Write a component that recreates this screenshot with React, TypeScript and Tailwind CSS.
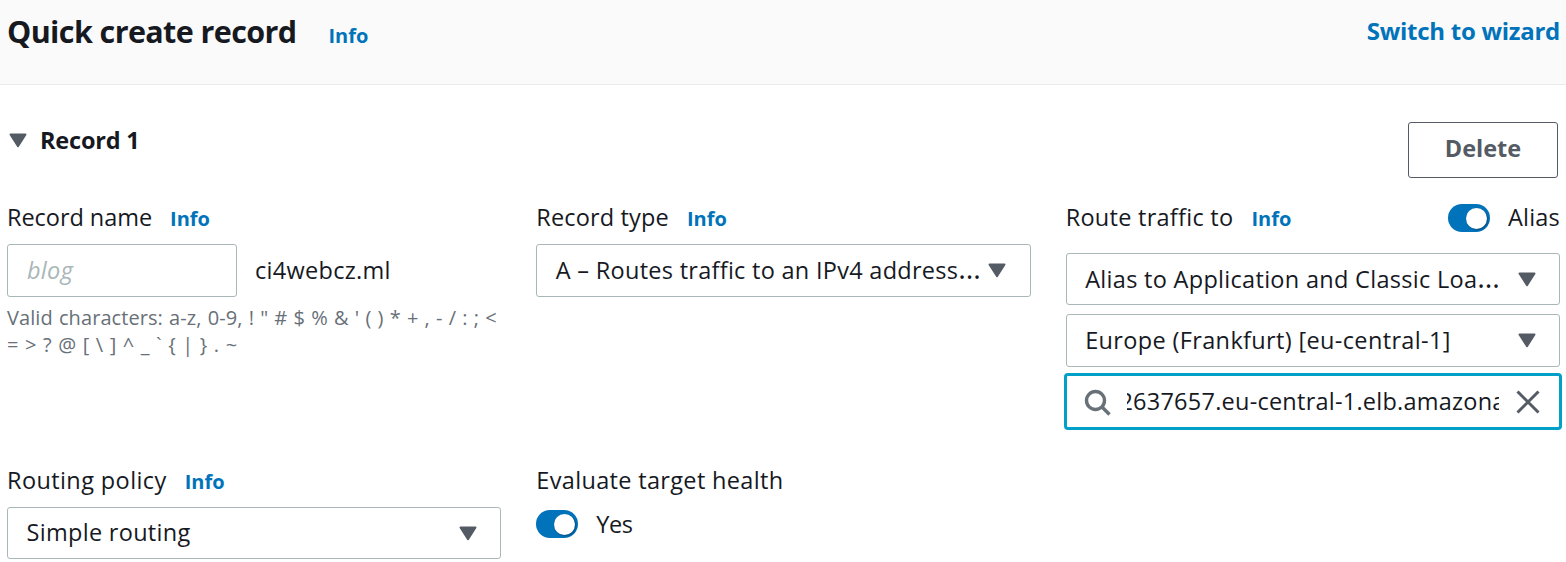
import type { ReactNode } from "react";

function Caret({ className = "" }: { className?: string }) {
  return (
    <svg width="18" height="15" viewBox="0 0 18 15" className={`block shrink-0 ${className}`}>
      <path d="M1.5 1.5h15L9 13.2z" fill="#545b64" stroke="#545b64" strokeWidth="2" strokeLinejoin="round" />
    </svg>
  );
}

function Info({ className = "" }: { className?: string }) {
  return (
    <a className={`text-[20px] leading-7 font-bold text-[#0073bb] ${className}`}>Info</a>
  );
}

function Label({ children, info = false, className = "" }: { children: ReactNode; info?: boolean; className?: string }) {
  return (
    <div className="-mt-px flex h-[33px] items-baseline gap-[18px] whitespace-nowrap">
      <span className={`leading-8 ${className}`}>{children}</span>
      {info && <Info />}
    </div>
  );
}

function Select({ children, className = "", caret = "mr-[23px]" }: { children: ReactNode; className?: string; caret?: string }) {
  return (
    <div className={`flex items-center justify-between rounded-[3px] border border-[#aab7b8] bg-white pl-[18.5px] ${className}`}>
      <span className="whitespace-nowrap">{children}</span>
      <Caret className={caret} />
    </div>
  );
}

function Ellipsis() {
  return <span className="text-[29px] leading-none tracking-normal">…</span>;
}

function Toggle() {
  return (
    <span className="flex h-7 w-[42px] shrink-0 items-center justify-end rounded-full bg-[#0073bb] pr-[3px]">
      <span className="h-[21px] w-[21px] rounded-full bg-white shadow-[1px_1px_2px_rgba(0,0,0,0.35)]" />
    </span>
  );
}

export default function App() {
  return (
    <div className="h-[562px] w-[1566px] overflow-hidden bg-white font-['Open_Sans','Noto_Sans',sans-serif] text-[23.5px] text-[#16191f]">
      <header className="flex h-[85px] items-start justify-between border-b border-[#eaeded] bg-[#fafafa] pr-[6px] pl-[7px]">
        <div className="flex items-baseline gap-8 pt-[11px]">
          <h1 className="text-[30.5px] leading-10 font-bold tracking-[-0.6px] whitespace-nowrap">Quick create record</h1>
          <Info />
        </div>
        <a className="pt-[15px] text-[24px] leading-8 font-bold tracking-[-0.27px] whitespace-nowrap text-[#0073bb]">Switch to wizard</a>
      </header>

      <main className="pr-[6px] pl-[7px]">
        <div className="flex h-[117px] items-start justify-between pt-[37px] pr-[2px]">
          <div className="flex items-center gap-[13px] pl-[2px]">
            <Caret className="mt-px" />
            <h2 className="text-[23.5px] leading-9 font-bold tracking-[-0.2px]">Record 1</h2>
          </div>
          <button className="h-14 w-[150px] rounded-[3px] border border-[#545b64] pb-[2px] font-bold text-[#545b64]">Delete</button>
        </div>

        <div className="grid h-[263px] grid-cols-3 gap-x-[35px]">
          <section>
            <Label info className="tracking-[-0.05px]">Record name</Label>
            <div className="mt-[10px] flex items-center gap-[18px]">
              <div className="flex h-[53px] w-[230px] items-center rounded-[3px] border border-[#aab7b8] pl-[19px] tracking-[0.3px] text-[#aab7b8] italic">blog</div>
              <span className="tracking-[0.3px]">ci4webcz.ml</span>
            </div>
            <p className="mt-[7px] text-[20px] leading-[27px] tracking-[0.08px] whitespace-nowrap text-[#687078]">
              <span className="[word-spacing:0.88px]">Valid characters: a-z, 0-9, ! " # $ % &amp; ' ( ) * + , - / : ; &lt;</span>
              <br />
              <span className="[word-spacing:1.2px]">= &gt; ? @ [ \ ] ^ _ ` {"{"} | {"}"} . ~</span>
            </p>
          </section>
          <section>
            <Label info className="tracking-[0.15px]">Record type</Label>
            <Select className="mt-[10px] h-[53px] tracking-[0.28px]" caret="mr-[24px]">
              A – Routes traffic to an IPv4 address<Ellipsis />
            </Select>
          </section>
          <section>
            <div className="flex items-center justify-between">
              <Label info className="tracking-[0.27px]">Route traffic to</Label>
              <div className="flex items-center gap-[18px]">
                <Toggle />
                <span className="-mt-[2px] leading-8 tracking-[0.2px]">Alias</span>
              </div>
            </div>
            <Select className="mt-[19px] h-[52px] pt-[2px] tracking-[0.3px]" caret="mr-[23px] -mt-[2px]">
              Alias to Application and Classic Loa<Ellipsis />
            </Select>
            <Select className="mt-[9px] h-[53px] tracking-[0.35px]">Europe (Frankfurt) [eu-central-1]</Select>
            <div className="-mx-[2px] mt-[6px] flex h-[57px] items-center rounded-[4px] border-3 border-[#00a1c9] pr-[19px] pl-[17px]">
              <svg width="27" height="27" viewBox="0 0 27 27" fill="none" stroke="#687078" className="mt-[2px] shrink-0">
                <circle cx="11.5" cy="11.5" r="9" strokeWidth="3.4" />
                <path d="M18 18l7.5 7.5" strokeWidth="3.4" />
              </svg>
              <div className="ml-[16px] flex w-[372px] justify-end overflow-hidden whitespace-nowrap">
                <span className="-mr-[7px] tracking-[0.24px]">2637657.eu-central-1.elb.amazona</span>
              </div>
              <svg width="24" height="24" viewBox="0 0 24 24" fill="none" stroke="#545b64" strokeWidth="3" className="ml-auto shrink-0">
                <path d="M1.5 1.5l21 21M22.5 1.5l-21 21" />
              </svg>
            </div>
          </section>
        </div>

        <div className="grid grid-cols-3 gap-x-[35px]">
          <section>
            <Label info className="tracking-[0.4px]">Routing policy</Label>
            <Select className="mt-[10px] h-[52px] tracking-[0.3px]">Simple routing</Select>
          </section>
          <section>
            <Label className="tracking-[0.33px]">Evaluate target health</Label>
            <div className="mt-[11px] flex items-center gap-[18px]">
              <Toggle />
              <span className="leading-8 tracking-[-0.5px]">Yes</span>
            </div>
          </section>
        </div>
      </main>
    </div>
  );
}
